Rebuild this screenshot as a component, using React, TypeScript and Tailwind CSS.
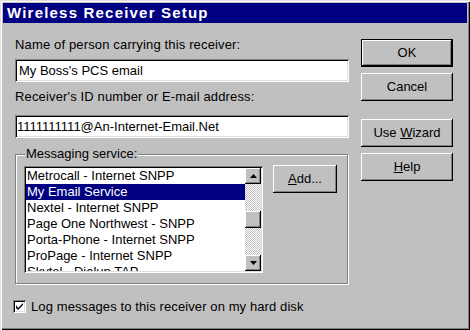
import React from "react";

const raised =
  "bg-[#c0c0c0] shadow-[inset_-1px_-1px_#000,inset_1px_1px_#fff,inset_-2px_-2px_#808080]";
const sunken =
  "bg-white shadow-[inset_1px_1px_#808080,inset_-1px_-1px_#fff,inset_2px_2px_#000,inset_-2px_-2px_#dfdfdf]";

function Btn({ children, def = false, className = "" }: { children: React.ReactNode; def?: boolean; className?: string }) {
  if (def) {
    return (
      <div className={`border border-black ${className}`}>
        <div className={`${raised} w-full h-full flex items-center justify-center`}>{children}</div>
      </div>
    );
  }
  return <div className={`${raised} flex items-center justify-center ${className}`}>{children}</div>;
}

function Arrow({ up }: { up: boolean }) {
  return (
    <svg width="7" height="4" viewBox="0 0 7 4">
      {up ? <path d="M3.5 0 L7 4 L0 4 Z" fill="#000" /> : <path d="M0 0 L7 0 L3.5 4 Z" fill="#000" />}
    </svg>
  );
}

const items = [
  "Metrocall - Internet SNPP",
  "My Email Service",
  "Nextel - Internet SNPP",
  "Page One Northwest - SNPP",
  "Porta-Phone - Internet SNPP",
  "ProPage - Internet SNPP",
  "Skytel - Dialup TAP",
];

export default function App() {
  return (
    <div
      className="w-[470px] h-[330px] bg-[#c0c0c0] p-[3px] text-black text-[13px] shadow-[inset_1px_1px_#dfdfdf,inset_2px_2px_#fff,inset_-1px_-1px_#000,inset_-2px_-2px_#808080] flex flex-col"
      style={{ fontFamily: '"Liberation Sans", Arial, sans-serif' }}
    >
      <div className="h-[20px] bg-[#000080] text-white font-bold text-[15px] tracking-[1.2px] leading-[20px] pl-[4px]">
        Wireless Receiver Setup
      </div>
      <div className="flex pl-[12px]">
        <div className="w-[334px] flex flex-col">
          <div className="mt-[14px] leading-[15px] tracking-[0.15px]">Name of person carrying this receiver:</div>
          <div className={`${sunken} mt-[7px] h-[23px] pl-[4px] leading-[23px]`}>My Boss's PCS email</div>
          <div className="mt-[7px] leading-[15px] tracking-[0.15px]">Receiver's ID number or E-mail address:</div>
          <div className={`${sunken} mt-[11px] h-[23px] pl-[2px] leading-[23px]`}>1111111111@An-Internet-Email.Net</div>
          <div className="relative mt-[16px] h-[130px] w-[333px] border border-[#808080] shadow-[inset_1px_1px_#fff,1px_1px_#fff] flex items-start pl-[8px] pt-[11px]">
            <span className="absolute left-[9px] top-[-9px] bg-[#c0c0c0] px-[1px] leading-[15px]">Messaging service:</span>
            <div className={`${sunken} w-[239px] h-[107px] p-[2px] flex`}>
              <div className="flex-1 overflow-hidden flex flex-col">
                {items.map((t, i) => (
                  <div
                    key={t}
                    className={`h-[16px] shrink-0 leading-[16px] pl-[1px] whitespace-nowrap ${
                      i === 1 ? "bg-[#000080] text-white" : ""
                    }`}
                  >
                    {t}
                  </div>
                ))}
              </div>
              <div className="w-[16px] flex flex-col bg-[repeating-conic-gradient(#c0c0c0_0_25%,#fff_0_50%)] bg-[length:2px_2px]">
                <div className={`${raised} h-[16px] shrink-0 flex items-center justify-center`}>
                  <Arrow up />
                </div>
                <div className="h-[27px]" />
                <div className={`${raised} h-[17px] shrink-0`} />
                <div className="flex-1" />
                <div className={`${raised} h-[16px] shrink-0 flex items-center justify-center`}>
                  <Arrow up={false} />
                </div>
              </div>
            </div>
            <Btn className="ml-[10px] mt-[-1px] w-[64px] h-[28px]">
              <span>
                <u>A</u>dd...
              </span>
            </Btn>
          </div>
          <div className="mt-[15px] flex items-center">
            <div className="ml-[-2px] w-[13px] h-[13px] bg-white shadow-[inset_1px_1px_#808080,inset_-1px_-1px_#fff,inset_2px_2px_#000,inset_-2px_-2px_#dfdfdf] flex items-center justify-center">
              <svg width="7" height="7" viewBox="0 0 7 7">
                <path d="M0 2 L0 5 L2 7 L7 2 L7 0 L2 5 Z" fill="#000" />
              </svg>
            </div>
            <span className="ml-[5px] leading-[15px] tracking-[0.1px]">Log messages to this receiver on my hard disk</span>
          </div>
        </div>
        <div className="ml-[12px] w-[92px] flex flex-col pt-[16px]">
          <Btn def className="h-[28px]">OK</Btn>
          <Btn className="mt-[6px] h-[28px]">Cancel</Btn>
          <Btn className="mt-[18px] h-[28px]">
            <span>
              Use <u>W</u>izard
            </span>
          </Btn>
          <Btn className="mt-[6px] h-[28px]">
            <span>
              <u>H</u>elp
            </span>
          </Btn>
        </div>
      </div>
    </div>
  );
}
